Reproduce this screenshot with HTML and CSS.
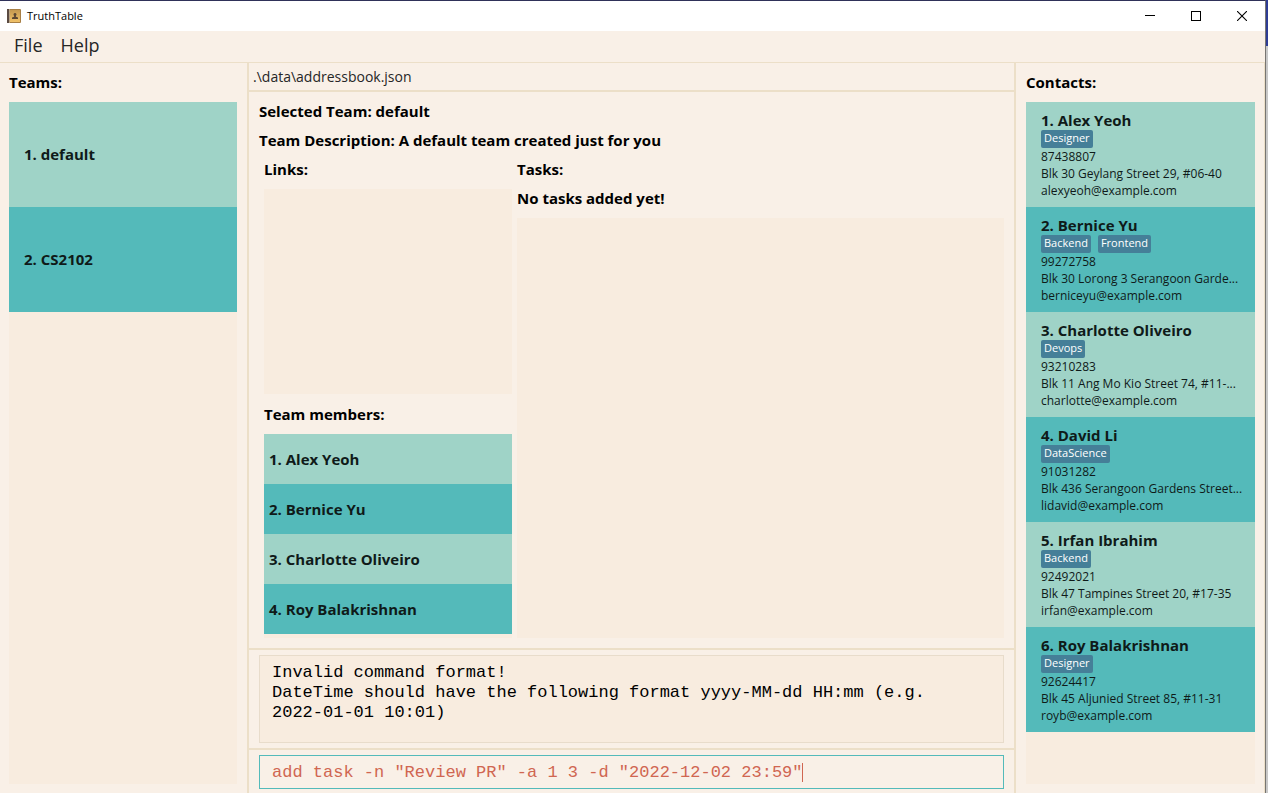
FILE: index.html
```html
<!DOCTYPE html>
<html lang="en">
<head>
<meta charset="utf-8">
<title>TruthTable</title>
<link rel="stylesheet" href="styles.css">
</head>
<body>
<div class="window">
  <header class="titlebar">
    <svg class="app-icon" width="14" height="14" viewBox="0 0 14 14" aria-hidden="true">
      <defs><linearGradient id="cover" x1="0" y1="0" x2="0" y2="1"><stop offset="0" stop-color="#c4984f"/><stop offset="1" stop-color="#f0c168"/></linearGradient></defs>
      <rect width="14" height="14" rx="1" fill="#a87f45"/>
      <rect x="3" y="1" width="10" height="12" fill="url(#cover)"/>
      <rect width="2" height="14" fill="#5a4a42"/>
      <rect x="2" width="1" height="14" fill="#b9a486"/>
      <path d="M8 4a1.500 1.500 0 0 1 .9 2.700v1l2.100.8V10H5V8.500l2.100-.8v-1A1.500 1.500 0 0 1 8 4z" fill="#5b4632"/>
    </svg>
    <h1 class="app-title">TruthTable</h1>
    <div class="window-controls">
      <button type="button" class="control" aria-label="Minimize"><svg width="10" height="10" viewBox="0 0 10 10" shape-rendering="crispEdges"><path d="M0 4h10v1H0z" fill="#000"/></svg></button>
      <button type="button" class="control" aria-label="Maximize"><svg width="10" height="10" viewBox="0 0 10 10" shape-rendering="crispEdges"><path d="M.5.5h9v9h-9z" fill="none" stroke="#000"/></svg></button>
      <button type="button" class="control" aria-label="Close"><svg width="10" height="10" viewBox="0 0 10 10"><path d="M0 0l10 10M10 0L0 10" stroke="#000" stroke-width="1.1"/></svg></button>
    </div>
  </header>
  <nav class="menubar">
    <button type="button" class="menu">File</button>
    <button type="button" class="menu">Help</button>
  </nav>
  <main class="workspace">
    <section class="side">
      <h2 class="label">Teams:</h2>
      <ol class="list">
        <li class="team">1. default</li>
        <li class="team">2. CS2102</li>
      </ol>
    </section>
    <div class="center">
      <p class="path">.\data\addressbook.json</p>
      <section class="details">
        <h2 class="label">Selected Team: default</h2>
        <h2 class="label">Team Description: A default team created just for you</h2>
        <div class="columns">
          <div class="column">
            <h3 class="label">Links:</h3>
            <div class="list"></div>
            <h3 class="label">Team members:</h3>
            <ol class="list">
              <li class="member">1. Alex Yeoh</li>
              <li class="member">2. Bernice Yu</li>
              <li class="member">3. Charlotte Oliveiro</li>
              <li class="member">4. Roy Balakrishnan</li>
            </ol>
          </div>
          <div class="column">
            <h3 class="label">Tasks:</h3>
            <p class="label">No tasks added yet!</p>
            <div class="list"></div>
          </div>
        </div>
      </section>
      <section class="result">
        <output class="message">Invalid command format!<br>DateTime should have the following format yyyy-MM-dd HH:mm (e.g. <span class="example">2022-01-01 10:01)</span></output>
      </section>
      <form class="command">
        <div class="field">
          <input class="command-input" type="text" aria-label="Command" value="add task -n &quot;Review PR&quot; -a 1 3 -d &quot;2022-12-02 23:59&quot;">
          <span class="caret"></span>
        </div>
      </form>
    </div>
    <section class="side">
      <h2 class="label">Contacts:</h2>
      <ol class="list">
        <li class="contact"><h3 class="name">1. Alex Yeoh</h3><div class="tags"><span class="tag">Designer</span></div><p class="line">87438807</p><p class="line">Blk 30 Geylang Street 29, #06-40</p><p class="line">alexyeoh@example.com</p></li>
        <li class="contact"><h3 class="name">2. Bernice Yu</h3><div class="tags"><span class="tag">Backend</span><span class="tag">Frontend</span></div><p class="line">99272758</p><p class="line">Blk 30 Lorong 3 Serangoon Garde...</p><p class="line">berniceyu@example.com</p></li>
        <li class="contact"><h3 class="name">3. Charlotte Oliveiro</h3><div class="tags"><span class="tag">Devops</span></div><p class="line">93210283</p><p class="line">Blk 11 Ang Mo Kio Street 74, #11-...</p><p class="line">charlotte@example.com</p></li>
        <li class="contact"><h3 class="name">4. David Li</h3><div class="tags"><span class="tag">DataScience</span></div><p class="line">91031282</p><p class="line">Blk 436 Serangoon Gardens Street...</p><p class="line">lidavid@example.com</p></li>
        <li class="contact"><h3 class="name">5. Irfan Ibrahim</h3><div class="tags"><span class="tag">Backend</span></div><p class="line">92492021</p><p class="line">Blk 47 Tampines Street 20, #17-35</p><p class="line">irfan@example.com</p></li>
        <li class="contact"><h3 class="name">6. Roy Balakrishnan</h3><div class="tags"><span class="tag">Designer</span></div><p class="line">92624417</p><p class="line">Blk 45 Aljunied Street 85, #11-31</p><p class="line">royb@example.com</p></li>
      </ol>
    </section>
  </main>
</div>
<div class="backdrop"></div>
</body>
</html>
```
FILE: styles.css
```css
* { box-sizing: border-box; margin: 0; padding: 0; }

body {
  display: flex;
  min-height: 100vh;
  font-family: "Segoe UI", "Open Sans", "Noto Sans", sans-serif;
  color: #000;
}

.window {
  flex: 1;
  min-width: 0;
  display: flex;
  flex-direction: column;
  background: #f9f0e7;
  border-top: 1px solid #2f3159;
  border-right: 1px solid #777571;
}

.backdrop {
  width: 2px;
  background: linear-gradient(#2e3c94 46px, #c8c8c8 46px);
}

.titlebar {
  display: flex;
  align-items: center;
  height: 30px;
  padding-left: 7px;
  gap: 6px;
  background: #fff;
}

.app-title { flex: 1; font-size: 11px; line-height: 14px; font-weight: 400; }

.window-controls { display: flex; align-self: stretch; }

.control {
  display: flex;
  align-items: center;
  justify-content: center;
  width: 46px;
  border: 0;
  background: none;
}

.menubar {
  display: flex;
  align-items: flex-start;
  height: 32px;
  padding: 0 5px;
  border-bottom: 1px solid #ecdfc8;
}

.menu {
  padding: 0 9px;
  border: 0;
  background: none;
  font: 18px/28px "Segoe UI", "Open Sans", sans-serif;
  color: #262626;
}

.workspace {
  flex: 1;
  display: grid;
  grid-template-columns: minmax(0, 247fr) minmax(0, 769fr) minmax(0, 248fr);
  border-right: 1px solid #ecdfc8;
}

.side {
  display: flex;
  flex-direction: column;
  gap: 11px;
  padding: 10px 10px 9px 9px;
}

.side:last-child { padding: 10px 9px 9px 10px; }

.label { font-size: 15px; line-height: 18px; font-weight: 700; white-space: nowrap; }

.list { flex: 1; list-style: none; background: #f8ecdf; }

.team, .member, .contact {
  background: #9fd3c7;
  color: #0f1a19;
  font-size: 15px;
  font-weight: 700;
}

.team:nth-child(even), .member:nth-child(even), .contact:nth-child(even) { background: #54baba; }

.team { height: 105px; padding-left: 15px; line-height: 105px; }

.member { height: 50px; padding-left: 5px; line-height: 50px; }

.center {
  display: flex;
  flex-direction: column;
  border: solid #ecdfc8;
  border-width: 0 2px;
}

.path {
  height: 29px;
  padding-left: 4px;
  border-bottom: 2px solid #ecdfc8;
  font-size: 14px;
  line-height: 27px;
  color: #262626;
}

.details {
  flex: 1;
  display: flex;
  flex-direction: column;
  gap: 11px;
  padding: 10px;
}

.columns {
  flex: 1;
  display: grid;
  grid-template-columns: minmax(0, 248fr) minmax(0, 487fr);
  gap: 5px;
  padding-left: 5px;
}

.column { display: flex; flex-direction: column; gap: 11px; }

.column .list { flex: 1 0 0; }

.result { padding: 5px 10px; border: solid #ecdfc8; border-width: 2px 0; }

.message {
  display: block;
  min-height: 88px;
  padding: 7px 12px;
  border: 1px solid #e8dccb;
  background: #f8ecdf;
  font: 17px/20px "Courier New", "Liberation Mono", monospace;
}

.example { white-space: nowrap; }

.command { padding: 5px 10px 4px; }

.field { position: relative; font: 17px/20px "Courier New", "Liberation Mono", monospace; color: #d06651; }

.command-input {
  display: block;
  width: 100%;
  height: 34px;
  padding: 0 12px;
  border: 1px solid #54baba;
  background: transparent;
  font: inherit;
  color: inherit;
  outline: 0;
}

.caret {
  position: absolute;
  top: 8px;
  left: calc(13px + 52ch);
  width: 1px;
  height: 19px;
  background: currentColor;
}

.contact { height: 105px; padding: 8px 5px 8px 15px; }

.name { font-size: 15px; line-height: 20px; }

.tags { display: flex; gap: 7px; height: 18px; }

.tag {
  padding: 0 3px 2px;
  border-radius: 2px;
  background: #457f98;
  font-size: 11px;
  font-weight: 400;
  line-height: 16px;
  color: #fff;
}

.line {
  font-size: 12px;
  font-weight: 400;
  line-height: 17px;
  white-space: nowrap;
}
```
